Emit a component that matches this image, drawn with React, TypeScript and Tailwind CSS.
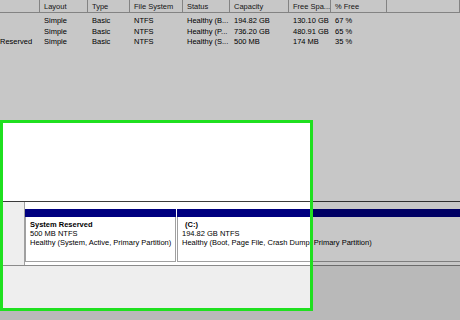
const cols = 'grid grid-cols-[40px_48px_42px_53px_47px_59px_42px_56px_1fr]';

const headers = ['', 'Layout', 'Type', 'File System', 'Status', 'Capacity', 'Free Spa...', '% Free', ''];

const rows = [
    ['', 'Simple', 'Basic', 'NTFS', 'Healthy (B...', '194.82 GB', '130.10 GB', '67 %'],
    ['', 'Simple', 'Basic', 'NTFS', 'Healthy (P...', '736.20 GB', '480.91 GB', '65 %'],
    ['Reserved', 'Simple', 'Basic', 'NTFS', 'Healthy (S...', '500 MB', '174 MB', '35 %'],
];

function Partition({ name, size, status, className, nameIndent }: { name: string; size: string; status: string; className: string; nameIndent?: string }) {
    return (
        <div className={`flex flex-col shrink-0 ${className}`}>
            <div className="h-[8px] bg-[#000080]" />
            <div className="flex-1 border-x border-b border-[#a0a0a0] pl-[4px] pt-[3px] leading-[9px] whitespace-nowrap">
                <div className={`font-bold ${nameIndent ?? ''}`}>{name}</div>
                <div>{size}</div>
                <div>{status}</div>
            </div>
        </div>
    );
}

export default function App() {
    return (
        <div
            className="relative w-[460px] h-[320px] overflow-hidden bg-[#eeeeee] text-[7.5px] text-black"
            style={{ fontFamily: '"Liberation Sans", Arial, sans-serif' }}
        >
            {/* volume list */}
            <div className="h-[201px] bg-white">
                <div className={`${cols} h-[13px] border-b border-[#a8a8a8] text-[#222]`}>
                    {headers.map((h, i) => (
                        <div key={i} className="border-r border-[#a8a8a8] pl-[4px] leading-[13px] whitespace-nowrap">
                            {h}
                        </div>
                    ))}
                </div>
                <div className="pt-[3px]">
                    {rows.map((r, i) => (
                        <div key={i} className={`${cols} h-[10.5px] leading-[10.5px]`}>
                            <div className="whitespace-nowrap">{r[0]}</div>
                            {r.slice(1).map((c, j) => (
                                <div key={j} className="pl-[4px] whitespace-nowrap">
                                    {c}
                                </div>
                            ))}
                        </div>
                    ))}
                </div>
            </div>

            {/* graphical disk view */}
            <div className="flex h-[65px] border-t border-[#3a3a3a] border-b border-b-[#8a8a8a]">
                <div className="w-[25px] shrink-0 bg-[#eeeeee] border-r border-[#a0a0a0]" />
                <div className="flex-1 flex gap-[1px] bg-white pt-[7px] pb-[3px] overflow-hidden">
                    <Partition
                        className="w-[151px]"
                        name="System Reserved"
                        size="500 MB NTFS"
                        status="Healthy (System, Active, Primary Partition)"
                    />
                    <Partition
                        className="w-[320px]"
                        name="(C:)"
                        nameIndent="pl-[3px]"
                        size="194.82 GB NTFS"
                        status="Healthy (Boot, Page File, Crash Dump, Primary Partition)"
                    />
                </div>
            </div>

            {/* highlight */}
            <div className="absolute left-0 top-[120px] w-[313px] h-[191px] border-[3px] border-[#1fe01f] shadow-[0_0_0_9999px_rgba(0,0,0,0.22)]" />
        </div>
    );
}
